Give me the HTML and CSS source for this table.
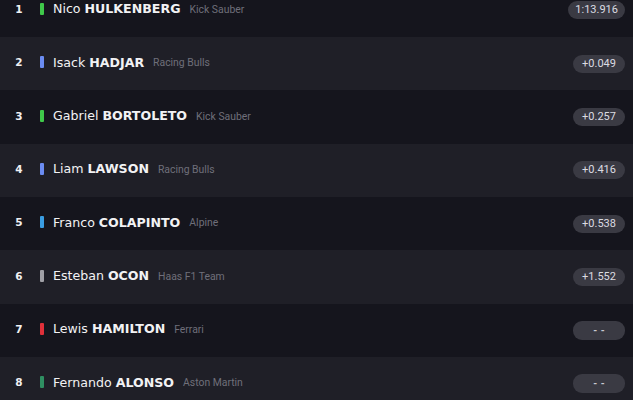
FILE: index.html
```html
<!DOCTYPE html>
<html>
<head>
<meta charset="utf-8">
<link rel="stylesheet" href="styles.css">
</head>
<body>
<div class="list">
  <div class="row odd"><span class="pos">1</span><span class="bar sauber"></span><span class="name">Nico <b>HULKENBERG</b></span><span class="team">Kick Sauber</span><span class="time">1:13.916</span></div>
  <div class="row even"><span class="pos">2</span><span class="bar rb"></span><span class="name">Isack <b>HADJAR</b></span><span class="team">Racing Bulls</span><span class="time">+0.049</span></div>
  <div class="row odd"><span class="pos">3</span><span class="bar sauber"></span><span class="name">Gabriel <b>BORTOLETO</b></span><span class="team">Kick Sauber</span><span class="time">+0.257</span></div>
  <div class="row even"><span class="pos">4</span><span class="bar rb"></span><span class="name">Liam <b>LAWSON</b></span><span class="team">Racing Bulls</span><span class="time">+0.416</span></div>
  <div class="row odd"><span class="pos">5</span><span class="bar alpine"></span><span class="name">Franco <b>COLAPINTO</b></span><span class="team">Alpine</span><span class="time">+0.538</span></div>
  <div class="row even"><span class="pos">6</span><span class="bar haas"></span><span class="name">Esteban <b>OCON</b></span><span class="team">Haas F1 Team</span><span class="time">+1.552</span></div>
  <div class="row odd"><span class="pos">7</span><span class="bar ferrari"></span><span class="name">Lewis <b>HAMILTON</b></span><span class="team">Ferrari</span><span class="time dash">- -</span></div>
  <div class="row even"><span class="pos">8</span><span class="bar aston"></span><span class="name">Fernando <b>ALONSO</b></span><span class="team">Aston Martin</span><span class="time dash">- -</span></div>
</div>
</body>
</html>
```
FILE: styles.css
```css
html, body {
  margin: 0;
  padding: 0;
  background: #15151d;
  overflow: hidden;
}
.list {
  margin-top: -16.3px;
  display: flex;
  flex-direction: column;
}
.row {
  height: 53.33px;
  display: flex;
  align-items: center;
  padding: 0 8px 0 12px;
  box-sizing: border-box;
}
.odd { background: #15151d; }
.even { background: #1f1f27; }
.pos {
  width: 14px;
  text-align: center;
  font-family: "DejaVu Sans", sans-serif;
  font-weight: bold;
  font-size: 10.5px;
  color: #f0f0f2;
  margin-right: 14px;
  margin-bottom: 3px;
}
.bar {
  width: 4px;
  height: 12px;
  border-radius: 1px;
  margin-right: 9px;
  margin-bottom: 3px;
}
.sauber { background: #3fc84a; }
.rb { background: #6b8cf2; }
.alpine { background: #3a9de2; }
.haas { background: #a0a0a6; }
.ferrari { background: #e0303a; }
.aston { background: #2f8f62; }
.name {
  font-family: "DejaVu Sans", sans-serif;
  font-size: 12.6px;
  color: #f2f2f4;
  margin-right: 9px;
  margin-bottom: 3px;
  white-space: nowrap;
}
.name b { font-weight: bold; }
.team {
  font-family: Roboto, sans-serif;
  font-size: 10.4px;
  color: #6f6f7a;
  flex: 1;
  margin-bottom: 2px;
}
.time {
  min-width: 52px;
  height: 18px;
  line-height: 18px;
  padding: 0 7px;
  box-sizing: border-box;
  border-radius: 9px;
  background: #3a3a43;
  color: #dcdce2;
  font-family: Roboto, sans-serif;
  font-size: 11px;
  text-align: center;
}
.time.dash {
  height: 19px;
  line-height: 19px;
  font-size: 10px;
  font-weight: bold;
  word-spacing: 1px;
  color: #c8c8d0;
}
```
